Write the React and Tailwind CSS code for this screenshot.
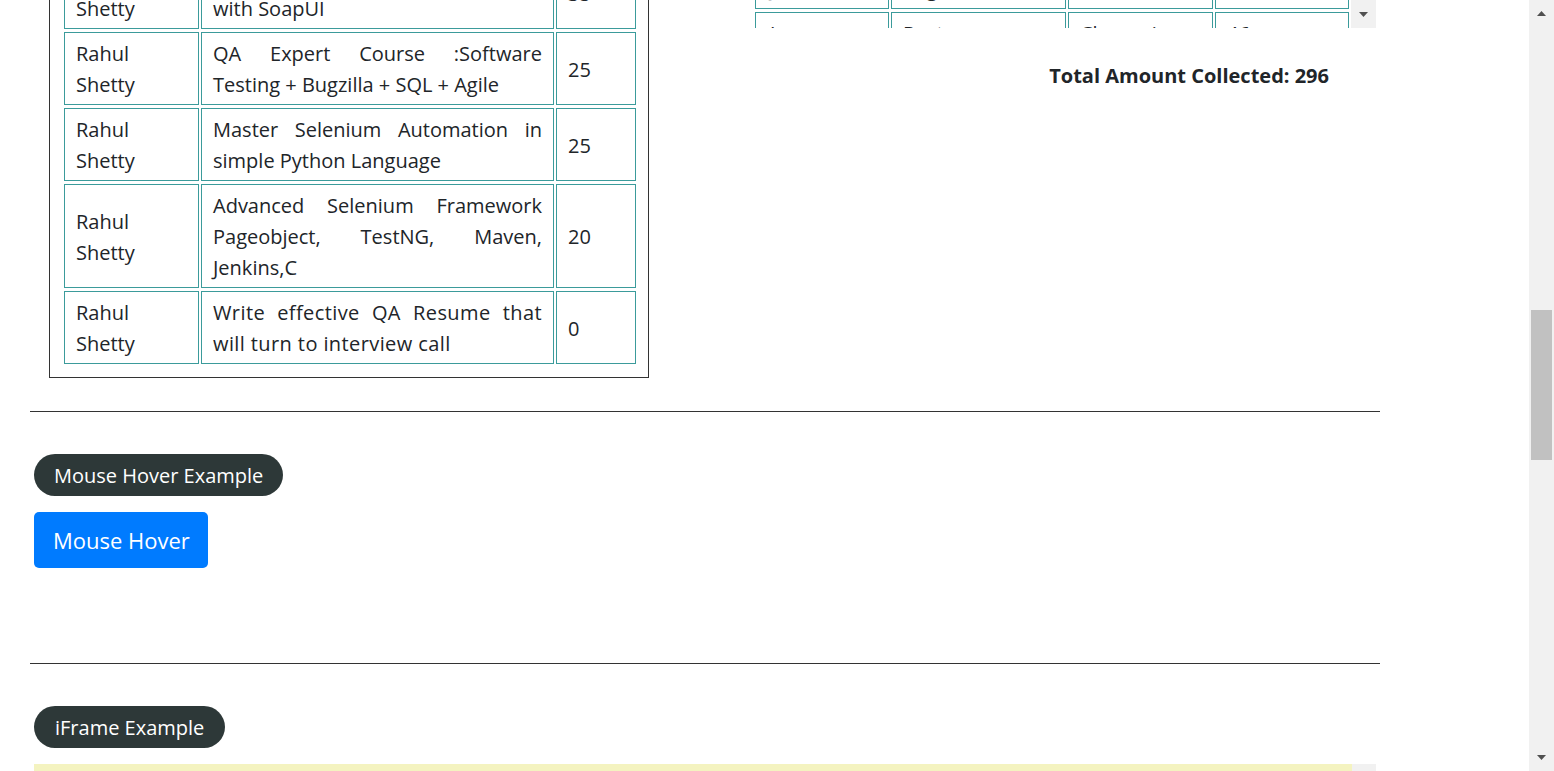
import React from "react";

const courses = [
  { name: "Rahul Shetty", course: "WebServices / REST API Testing with SoapUI", price: 35 },
  { name: "Rahul Shetty", course: "QA Expert Course :Software Testing + Bugzilla + SQL + Agile", price: 25 },
  { name: "Rahul Shetty", course: "Master Selenium Automation in simple Python Language", price: 25 },
  { name: "Rahul Shetty", course: "Advanced Selenium Framework Pageobject, TestNG, Maven, Jenkins,C", price: 20 },
  { name: "Rahul Shetty", course: "Write effective QA Resume that will turn to interview call", price: 0, wide: true },
];

const people = [
  { name: "Jack", position: "Engineer", city: "Pune", amount: 32 },
  { name: "Joe", position: "Postman", city: "Chennai", amount: 46 },
];

function ArrowUp() {
  return (
    <svg width="9" height="5" viewBox="0 0 9 5">
      <path d="M0 5 L4.5 0 L9 5 Z" fill="#505050" />
    </svg>
  );
}

function ArrowDown() {
  return (
    <svg width="9" height="5" viewBox="0 0 9 5">
      <path d="M0 0 L9 0 L4.5 5 Z" fill="#505050" />
    </svg>
  );
}

const cell = "border border-[#3b9b9b] pt-[5px] pb-[4px] px-[11px] align-middle";

export default function App() {
  return (
    <div
      className="flex h-[771px] w-[1554px] overflow-hidden bg-white text-[#212529] text-[20px] leading-[31px]"
      style={{ fontFamily: "'Open Sans', 'Noto Sans', sans-serif" }}
    >
      {/* page content */}
      <div className="w-[1529px] shrink-0">
        <div className="-mt-[60px] ml-[30px] w-[1350px]">
          {/* tables row */}
          <div className="flex">
            <div className="w-[675px] shrink-0">
              <div className="ml-[19px] w-[600px] border border-[#333] pl-[12px] pr-[11px] pt-[12px] pb-[10px]">
                <table className="w-[576px] table-fixed border-separate border-spacing-x-[2px] border-spacing-y-[3px]">
                  <tbody>
                    {courses.map((c, i) => (
                      <tr key={i}>
                        <td className={`${cell} w-[135px]`}>{c.name}</td>
                        <td className={`${cell} w-[353px] text-justify ${c.wide ? "tracking-[0.4px]" : ""}`}>
                          {c.course}
                        </td>
                        <td className={`${cell} w-[80px]`}>{c.price}</td>
                      </tr>
                    ))}
                  </tbody>
                </table>
              </div>
            </div>

            <div className="flex-1 pl-[48px]">
              {/* fixed header table, scrolled to the bottom */}
              <div className="flex h-[88px] w-[623px] overflow-hidden">
                <div className="w-[598px]">
                  <table className="mt-[24px] w-[598px] table-fixed border-separate border-spacing-x-[2px] border-spacing-y-[3px]">
                    <tbody>
                      {people.map((p, i) => (
                        <tr key={i}>
                          <td className={`${cell} w-[134px] pl-[14px]`}>{p.name}</td>
                          <td className={`${cell} w-[175px]`}>{p.position}</td>
                          <td className={`${cell} w-[145px]`}>{p.city}</td>
                          <td className={`${cell} w-[134px]`}>{p.amount}</td>
                        </tr>
                      ))}
                    </tbody>
                  </table>
                </div>
                <div className="flex w-[25px] flex-col justify-end items-center bg-[#f1f1f1] pb-[11px]">
                  <ArrowDown />
                </div>
              </div>
              <div className="mt-[32px] w-[623px] pr-[47px] text-right font-bold">
                Total Amount Collected: 296
              </div>
            </div>
          </div>

          <hr className="mt-[33px] border-0 border-t border-[#333]" />

          {/* mouse hover */}
          <div className="ml-[4px] mt-[42px]">
            <div className="inline-flex h-[42px] items-center rounded-full bg-[#2d3838] px-[20px] text-white">
              Mouse Hover Example
            </div>
            <div className="mt-[16px]">
              <button className="h-[56px] w-[174px] rounded-[5px] bg-[#007bff] pl-[19px] text-left text-[22px] text-white">
                Mouse Hover
              </button>
            </div>
          </div>

          <hr className="mt-[95px] border-0 border-t border-[#333]" />

          {/* iframe */}
          <div className="ml-[4px] mt-[42px]">
            <div className="inline-flex h-[42px] items-center rounded-full bg-[#2d3838] px-[21px] text-white">
              iFrame Example
            </div>
            <div className="mt-[16px] flex h-[300px] w-[1342px]">
              <div className="flex-1 bg-[#f4f3c0]" />
              <div className="w-[24px] bg-[#f1f1f1]" />
            </div>
          </div>
        </div>
      </div>

      {/* page scrollbar */}
      <div className="flex w-[25px] flex-col items-center bg-[#f1f1f1]">
        <div className="mt-[11px]">
          <ArrowUp />
        </div>
        <div className="mt-[294px] h-[150px] w-[21px] bg-[#c1c1c1]" />
        <div className="flex-1" />
        <div className="mb-[11px]">
          <ArrowDown />
        </div>
      </div>
    </div>
  );
}
